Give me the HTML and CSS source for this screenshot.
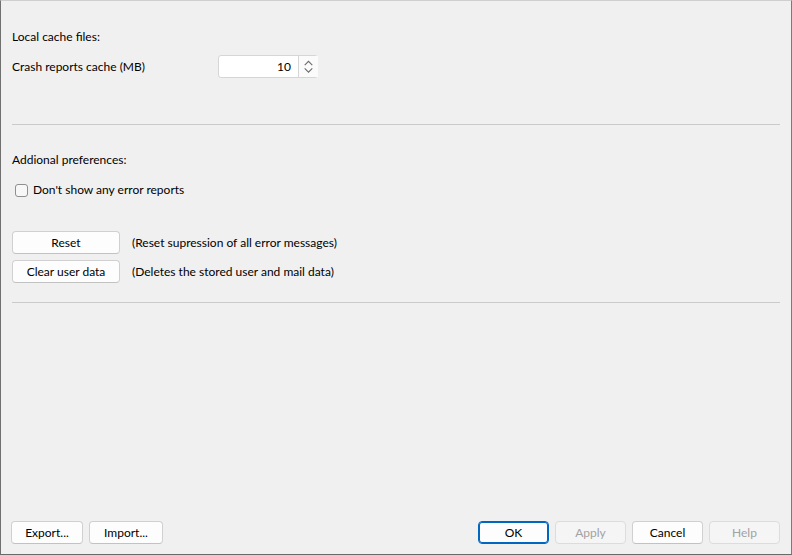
FILE: index.html
```html
<!DOCTYPE html>
<html lang="en">
<head>
    <meta charset="UTF-8">
    <meta name="viewport" content="width=device-width, initial-scale=1.0">
    <title>Preferences</title>
    <link rel="stylesheet" href="styles.css">
</head>
<body>
    <div class="dialog">
        <div class="content">
            <div class="section-title">Local cache files:</div>

            <div class="field-row">
                <label class="field-label" for="crashCache">Crash reports cache (MB)</label>
                <div class="spinbox">
                    <input type="text" id="crashCache" value="10">
                    <div class="spin-buttons">
                        <svg width="20" height="21" viewBox="0 0 20 21">
                            <polyline points="6,9 10,5 14,9" fill="none" stroke="#6a6a6a" stroke-width="1.1"/>
                            <polyline points="6,12.5 10,16.5 14,12.5" fill="none" stroke="#6a6a6a" stroke-width="1.1"/>
                        </svg>
                    </div>
                </div>
            </div>

            <hr class="separator first">

            <div class="section-title">Addional preferences:</div>

            <label class="check-row">
                <span class="checkbox"></span>
                Don't show any error reports
            </label>

            <div class="action-row reset-row">
                <button class="btn wide">Reset</button>
                <span class="action-note">(Reset supression of all error messages)</span>
            </div>
            <div class="action-row">
                <button class="btn wide">Clear user data</button>
                <span class="action-note">(Deletes the stored user and mail data)</span>
            </div>

            <hr class="separator second">
        </div>

        <div class="footer">
            <div class="footer-left">
                <button class="btn export">Export...</button>
                <button class="btn import">Import...</button>
            </div>
            <div class="footer-right">
                <button class="btn default">OK</button>
                <button class="btn" disabled>Apply</button>
                <button class="btn">Cancel</button>
                <button class="btn" disabled>Help</button>
            </div>
        </div>
    </div>
</body>
</html>
```

FILE: styles.css
```css
:root {
    --bg-color: #f0f0f0;
    --text-color: #000000;
    --line-color: #cbcbcb;
    --btn-border: #d0d0d0;
    --accent-color: #0067c0;
    --disabled-color: #a2a2a2;
}

* {
    margin: 0;
    padding: 0;
    box-sizing: border-box;
}

body {
    font-family: Lato, "Open Sans", sans-serif;
    font-size: 12px;
    line-height: 16px;
    color: var(--text-color);
    background-color: var(--bg-color);
}

.dialog {
    width: 792px;
    height: 555px;
    display: flex;
    flex-direction: column;
    background-color: var(--bg-color);
    border-top: 1px solid #cfcfcf;
    border-left: 1px solid #707070;
    border-right: 1px solid #7a7a7a;
    border-bottom: 1px solid #6a6a6a;
}

.content {
    flex: 1;
    padding: 28px 11px 0 11px;
}

.section-title {
    height: 16px;
}

.field-row {
    display: flex;
    align-items: center;
    margin-top: 10px;
    height: 23px;
}

.field-label {
    width: 206px;
}

.spinbox {
    display: flex;
    width: 100px;
    height: 23px;
    background-color: white;
    border: 1px solid #d6d6d6;
    border-radius: 3px;
}

.spinbox input {
    width: 79px;
    border: none;
    outline: none;
    background: transparent;
    font-family: inherit;
    font-size: 12px;
    text-align: right;
    padding-right: 7px;
    color: var(--text-color);
}

.spin-buttons {
    width: 20px;
    border-left: 1px solid #d6d6d6;
    background-color: #fbfbfb;
    display: flex;
    align-items: center;
}

.separator {
    border: none;
    border-top: 1px solid var(--line-color);
}

.separator.first {
    margin-top: 46px;
    margin-bottom: 27px;
}

.separator.second {
    margin-top: 19px;
}

.check-row {
    display: flex;
    align-items: center;
    margin-top: 14px;
    height: 16px;
    padding-left: 3px;
}

.checkbox {
    width: 13px;
    height: 13px;
    border: 1px solid #8f8f8f;
    border-radius: 3px;
    background-color: #f7f7f7;
    margin-right: 5px;
}

.action-row {
    display: flex;
    align-items: center;
    margin-top: 6px;
}

.action-row.reset-row {
    margin-top: 33px;
}

.action-note {
    margin-left: 12px;
}

.btn {
    height: 23px;
    width: 71px;
    padding: 0;
    font-family: inherit;
    font-size: 12px;
    color: var(--text-color);
    background-color: #fdfdfd;
    border: 1px solid var(--btn-border);
    border-bottom-color: #c2c2c2;
    border-radius: 4px;
}

.btn.wide {
    width: 108px;
}

.btn.export {
    width: 72px;
}

.btn.import {
    width: 74px;
}

.btn.default {
    border: 1px solid var(--accent-color);
    box-shadow: inset 0 0 0 1px var(--accent-color);
}

.btn:disabled {
    color: var(--disabled-color);
    background-color: #f5f5f5;
    border-color: #dcdcdc;
}

.footer {
    display: flex;
    justify-content: space-between;
    align-items: center;
    padding: 0 11px 10px 10px;
}

.footer-left,
.footer-right {
    display: flex;
    gap: 6px;
}
```
